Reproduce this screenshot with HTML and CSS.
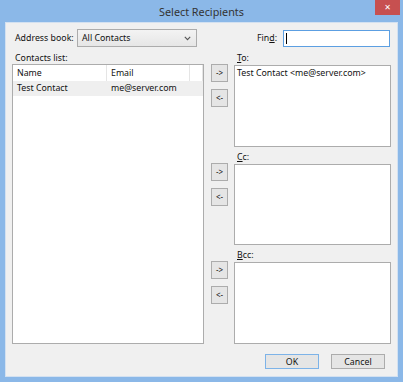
FILE: index.html
```html
<!DOCTYPE html>
<html>
<head>
<meta charset="utf-8">
<link rel="stylesheet" href="styles.css">
</head>
<body>
<div class="window">
  <div class="titlebar">
    <span class="title">Select Recipients</span>
    <div class="close">&#x2715;</div>
  </div>
  <div class="client">
    <div class="toprow">
      <span class="lbl-ab">Address book:</span>
      <div class="select">
        <span>All Contacts</span>
        <svg class="chev" width="7" height="5" viewBox="0 0 7 5"><polyline points="0.8,0.8 3.5,3.6 6.2,0.8" fill="none" stroke="#555" stroke-width="1.1"/></svg>
      </div>
      <div class="spacer"></div>
      <span class="lbl-find">Fin<u>d</u>:</span>
      <div class="input"><span class="caret"></span></div>
    </div>
    <div class="main">
      <div class="left">
        <div class="caption cap-l">Contacts list:</div>
        <div class="listview">
          <div class="lv-header">
            <div class="col col-name">Name</div>
            <div class="col col-email">Email</div>
            <div class="col col-fill"></div>
          </div>
          <div class="lv-row">
            <div class="col col-name">Test Contact</div>
            <div class="col col-email">me@server.com</div>
          </div>
        </div>
      </div>
      <div class="right">
        <div class="group">
          <div class="btns"><button class="arrow">-&gt;</button><button class="arrow">&lt;-</button></div>
          <div class="field">
            <div class="caption cap-r"><u>T</u>o:</div>
            <div class="box">Test Contact &lt;me@server.com&gt;</div>
          </div>
        </div>
        <div class="group">
          <div class="btns"><button class="arrow">-&gt;</button><button class="arrow">&lt;-</button></div>
          <div class="field">
            <div class="caption cap-r"><u>C</u>c:</div>
            <div class="box"></div>
          </div>
        </div>
        <div class="group">
          <div class="btns"><button class="arrow">-&gt;</button><button class="arrow">&lt;-</button></div>
          <div class="field">
            <div class="caption cap-r"><u>B</u>cc:</div>
            <div class="box"></div>
          </div>
        </div>
      </div>
    </div>
    <div class="footer">
      <button class="btn ok">OK</button>
      <button class="btn">Cancel</button>
    </div>
  </div>
</div>
</body>
</html>
```
FILE: styles.css
```css
* { box-sizing: border-box; }
body { margin: 0; }
.window {
  width: 403px;
  height: 382px;
  background: #8bb8e8;
  padding: 0 5px 5px;
  display: flex;
  flex-direction: column;
  position: relative;
  font-family: "Noto Sans", "Open Sans", sans-serif;
  font-size: 8.8px;
  color: #111;
}
.titlebar {
  height: 22px;
  display: flex;
  align-items: center;
  justify-content: center;
}
.title {
  font-size: 10.8px;
  color: #333;
  margin-top: 1px;
}
.close {
  position: absolute;
  top: 0;
  right: 3px;
  width: 25px;
  height: 15px;
  background: #c75050;
  color: #fff;
  display: flex;
  align-items: center;
  justify-content: center;
  font-family: "DejaVu Sans", sans-serif;
  font-weight: bold;
  font-size: 8px;
}
.client {
  flex: 1;
  background: #f0f0f0;
  border: 1px solid #d3e1f1;
  padding: 6px 6px 7px;
  display: flex;
  flex-direction: column;
}
.toprow {
  display: flex;
  align-items: center;
  height: 18px;
}
.lbl-ab { margin-left: 3px; width: 62px; }
.select {
  width: 120px;
  height: 18px;
  border: 1px solid #acacac;
  background: linear-gradient(#f3f3f3, #e6e6e6);
  display: flex;
  align-items: center;
  justify-content: space-between;
  padding: 0 5px 0 4px;
}
.chev { display: block; }
.spacer { flex: 1; }
.lbl-find { margin-right: 6px; }
.input {
  width: 107px;
  height: 17px;
  border: 1px solid #5c9fe2;
  background: #fff;
  margin-right: 1px;
  padding: 2px 0 0 2px;
}
.caret {
  display: block;
  width: 1px;
  height: 11px;
  background: #000;
}
.main {
  flex: 1;
  display: flex;
  gap: 7px;
  margin-top: 5px;
}
.left {
  width: 192px;
  display: flex;
  flex-direction: column;
}
.caption {
  height: 12px;
  line-height: 12px;
}
.cap-l { padding-left: 3px; }
.listview {
  flex: 1;
  border: 1px solid #acacac;
  background: #fff;
}
.lv-header, .lv-row {
  display: flex;
}
.lv-header { height: 16px; }
.lv-row { height: 15px; background: #efefef; }
.col {
  padding-left: 4px;
  line-height: 15px;
  white-space: nowrap;
}
.lv-header .col { border-right: 1px solid #e5e5e5; line-height: 16px; }
.col-name { width: 94px; }
.col-email { width: 83px; }
.lv-header .col-fill { width: 13px; }
.right {
  flex: 1;
  display: flex;
  flex-direction: column;
  gap: 4px;
}
.group {
  flex: 1;
  display: flex;
  gap: 6px;
}
.btns {
  width: 17px;
  padding-top: 12px;
  display: flex;
  flex-direction: column;
  gap: 7px;
}
.arrow {
  width: 17px;
  height: 18px;
  padding: 0;
  border: 1px solid #acacac;
  background: #e5e5e5;
  font: inherit;
  font-size: 8px;
  color: #111;
  line-height: 14px;
}
.field {
  flex: 1;
  display: flex;
  flex-direction: column;
}
.cap-r { height: 13px; padding-left: 3px; }
.box {
  flex: 1;
  border: 1px solid #acacac;
  background: #fff;
  padding: 1px 2px;
  line-height: 13px;
}
.footer {
  display: flex;
  justify-content: flex-end;
  gap: 12px;
  margin-top: 10px;
  padding-right: 6px;
}
.btn {
  width: 54px;
  height: 15px;
  padding: 0;
  border: 1px solid #acacac;
  background: #e5e5e5;
  font: inherit;
  color: #111;
  line-height: 12px;
}
.ok { border-color: #7db3e8; }
```
